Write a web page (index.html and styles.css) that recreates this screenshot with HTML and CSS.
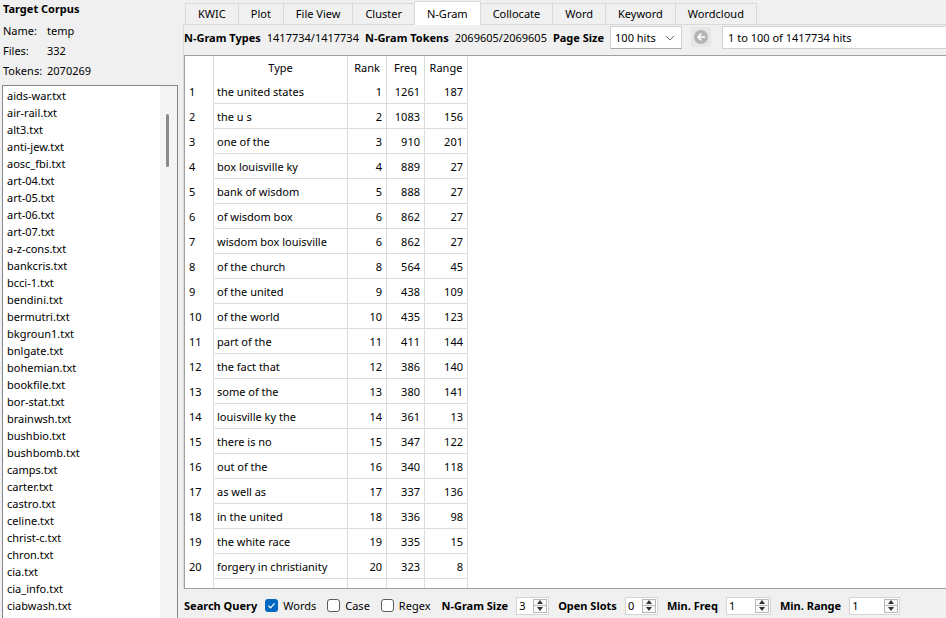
FILE: index.html
```html
<!DOCTYPE html>
<html lang="en">
<head>
    <meta charset="UTF-8">
    <title>AntConc - N-Gram</title>
    <link rel="stylesheet" href="styles.css">
</head>
<body>
<div class="app">
    <aside class="sidebar">
        <div class="corpus-title">Target Corpus</div>
        <div class="corpus-info">
            <span>Name:</span><span>temp</span>
            <span>Files:</span><span>332</span>
            <span>Tokens:</span><span>2070269</span>
        </div>
        <div class="file-list">
            <ul class="files">
                <li>aids-war.txt</li>
                <li>air-rail.txt</li>
                <li>alt3.txt</li>
                <li>anti-jew.txt</li>
                <li>aosc_fbi.txt</li>
                <li>art-04.txt</li>
                <li>art-05.txt</li>
                <li>art-06.txt</li>
                <li>art-07.txt</li>
                <li>a-z-cons.txt</li>
                <li>bankcris.txt</li>
                <li>bcci-1.txt</li>
                <li>bendini.txt</li>
                <li>bermutri.txt</li>
                <li>bkgroun1.txt</li>
                <li>bnlgate.txt</li>
                <li>bohemian.txt</li>
                <li>bookfile.txt</li>
                <li>bor-stat.txt</li>
                <li>brainwsh.txt</li>
                <li>bushbio.txt</li>
                <li>bushbomb.txt</li>
                <li>camps.txt</li>
                <li>carter.txt</li>
                <li>castro.txt</li>
                <li>celine.txt</li>
                <li>christ-c.txt</li>
                <li>chron.txt</li>
                <li>cia.txt</li>
                <li>cia_info.txt</li>
                <li>ciabwash.txt</li>
            </ul>
            <div class="scrollbar"><div class="thumb"></div></div>
        </div>
    </aside>

    <main class="main">
        <nav class="tabs">
            <div class="tab">KWIC</div>
            <div class="tab">Plot</div>
            <div class="tab">File View</div>
            <div class="tab">Cluster</div>
            <div class="tab active">N-Gram</div>
            <div class="tab">Collocate</div>
            <div class="tab">Word</div>
            <div class="tab">Keyword</div>
            <div class="tab">Wordcloud</div>
        </nav>

        <section class="tab-panel">
            <div class="toolbar">
                <span class="label">N-Gram Types</span>
                <span class="value">1417734/1417734</span>
                <span class="label">N-Gram Tokens</span>
                <span class="value">2069605/2069605</span>
                <span class="label">Page Size</span>
                <div class="select">
                    <span>100 hits</span>
                    <svg width="10" height="6" viewBox="0 0 10 6"><polyline points="1,1 5,5 9,1" fill="none" stroke="#6b6b6b" stroke-width="1"/></svg>
                </div>
                <button class="nav-btn" type="button">
                    <svg width="14" height="14" viewBox="0 0 14 14">
                        <circle cx="7" cy="7" r="7" fill="#b4b4b4"/>
                        <path d="M10.5 7H4 M6.8 4.2L4 7L6.8 9.8" fill="none" stroke="#fff" stroke-width="1.7" stroke-linecap="round" stroke-linejoin="round"/>
                    </svg>
                </button>
                <div class="hits">1 to 100 of 1417734 hits</div>
            </div>

            <div class="results">
                <table class="grid">
                    <colgroup>
                        <col class="c-num">
                        <col class="c-type">
                        <col class="c-rank">
                        <col class="c-freq">
                        <col class="c-range">
                    </colgroup>
                    <thead>
                        <tr><th></th><th>Type</th><th>Rank</th><th>Freq</th><th>Range</th></tr>
                    </thead>
                    <tbody>
                        <tr><td class="num">1</td><td class="type">the united states</td><td>1</td><td>1261</td><td>187</td></tr>
                        <tr><td class="num">2</td><td class="type">the u s</td><td>2</td><td>1083</td><td>156</td></tr>
                        <tr><td class="num">3</td><td class="type">one of the</td><td>3</td><td>910</td><td>201</td></tr>
                        <tr><td class="num">4</td><td class="type">box louisville ky</td><td>4</td><td>889</td><td>27</td></tr>
                        <tr><td class="num">5</td><td class="type">bank of wisdom</td><td>5</td><td>888</td><td>27</td></tr>
                        <tr><td class="num">6</td><td class="type">of wisdom box</td><td>6</td><td>862</td><td>27</td></tr>
                        <tr><td class="num">7</td><td class="type">wisdom box louisville</td><td>6</td><td>862</td><td>27</td></tr>
                        <tr><td class="num">8</td><td class="type">of the church</td><td>8</td><td>564</td><td>45</td></tr>
                        <tr><td class="num">9</td><td class="type">of the united</td><td>9</td><td>438</td><td>109</td></tr>
                        <tr><td class="num">10</td><td class="type">of the world</td><td>10</td><td>435</td><td>123</td></tr>
                        <tr><td class="num">11</td><td class="type">part of the</td><td>11</td><td>411</td><td>144</td></tr>
                        <tr><td class="num">12</td><td class="type">the fact that</td><td>12</td><td>386</td><td>140</td></tr>
                        <tr><td class="num">13</td><td class="type">some of the</td><td>13</td><td>380</td><td>141</td></tr>
                        <tr><td class="num">14</td><td class="type">louisville ky the</td><td>14</td><td>361</td><td>13</td></tr>
                        <tr><td class="num">15</td><td class="type">there is no</td><td>15</td><td>347</td><td>122</td></tr>
                        <tr><td class="num">16</td><td class="type">out of the</td><td>16</td><td>340</td><td>118</td></tr>
                        <tr><td class="num">17</td><td class="type">as well as</td><td>17</td><td>337</td><td>136</td></tr>
                        <tr><td class="num">18</td><td class="type">in the united</td><td>18</td><td>336</td><td>98</td></tr>
                        <tr><td class="num">19</td><td class="type">the white race</td><td>19</td><td>335</td><td>15</td></tr>
                        <tr><td class="num">20</td><td class="type">forgery in christianity</td><td>20</td><td>323</td><td>8</td></tr>
                        <tr><td class="num">21</td><td class="type">to be found</td><td>21</td><td>319</td><td>9</td></tr>
                    </tbody>
                </table>
            </div>
        </section>

        <div class="search-bar">
            <span class="label">Search Query</span>
            <label class="check first">
                <svg width="13" height="13" viewBox="0 0 13 13">
                    <rect x="0" y="0" width="13" height="13" rx="3" fill="#0067c0"/>
                    <polyline points="3.5,6.8 5.6,8.8 9.6,4.4" fill="none" stroke="#fff" stroke-width="1.2"/>
                </svg>
                Words
            </label>
            <label class="check">
                <svg width="13" height="13" viewBox="0 0 13 13"><rect x="0.5" y="0.5" width="12" height="12" rx="2.5" fill="#fff" stroke="#5c5c5c"/></svg>
                Case
            </label>
            <label class="check">
                <svg width="13" height="13" viewBox="0 0 13 13"><rect x="0.5" y="0.5" width="12" height="12" rx="2.5" fill="#fff" stroke="#5c5c5c"/></svg>
                Regex
            </label>
            <div class="field">
                <span class="label">N-Gram Size</span>
                <div class="spin spin-sm">
                    <span class="spin-val">3</span>
                    <span class="spin-btns">
                        <span><svg width="6" height="4" viewBox="0 0 6 4"><polygon points="0,4 3,0 6,4" fill="#333"/></svg></span>
                        <span><svg width="6" height="4" viewBox="0 0 6 4"><polygon points="0,0 3,4 6,0" fill="#333"/></svg></span>
                    </span>
                </div>
            </div>
            <div class="field">
                <span class="label">Open Slots</span>
                <div class="spin spin-sm">
                    <span class="spin-val">0</span>
                    <span class="spin-btns">
                        <span><svg width="6" height="4" viewBox="0 0 6 4"><polygon points="0,4 3,0 6,4" fill="#333"/></svg></span>
                        <span><svg width="6" height="4" viewBox="0 0 6 4"><polygon points="0,0 3,4 6,0" fill="#333"/></svg></span>
                    </span>
                </div>
            </div>
            <div class="field">
                <span class="label">Min. Freq</span>
                <div class="spin spin-md">
                    <span class="spin-val">1</span>
                    <span class="spin-btns">
                        <span><svg width="6" height="4" viewBox="0 0 6 4"><polygon points="0,4 3,0 6,4" fill="#333"/></svg></span>
                        <span><svg width="6" height="4" viewBox="0 0 6 4"><polygon points="0,0 3,4 6,0" fill="#333"/></svg></span>
                    </span>
                </div>
            </div>
            <div class="field">
                <span class="label">Min. Range</span>
                <div class="spin spin-lg">
                    <span class="spin-val">1</span>
                    <span class="spin-btns">
                        <span><svg width="6" height="4" viewBox="0 0 6 4"><polygon points="0,4 3,0 6,4" fill="#333"/></svg></span>
                        <span><svg width="6" height="4" viewBox="0 0 6 4"><polygon points="0,0 3,4 6,0" fill="#333"/></svg></span>
                    </span>
                </div>
            </div>
        </div>
    </main>
</div>
</body>
</html>
```

FILE: styles.css
```css
* {
    margin: 0;
    padding: 0;
    box-sizing: border-box;
}

body {
    font-family: "Noto Sans", "Segoe UI", Arial, sans-serif;
    font-size: 11px;
    color: #000;
    background: #f0f0f0;
    width: 946px;
    height: 618px;
    overflow: hidden;
}

.app {
    display: flex;
    height: 618px;
}

/* left: corpus info + file list */

.sidebar {
    width: 183px;
    flex-shrink: 0;
    display: flex;
    flex-direction: column;
    padding-left: 2px;
    min-height: 0;
}

.corpus-title {
    font-weight: 700;
    line-height: 18px;
    padding-left: 1px;
    margin-bottom: 2px;
}

.corpus-info {
    display: grid;
    grid-template-columns: 44px auto;
    grid-auto-rows: 20.3px;
    align-items: center;
    padding-left: 1px;
}

.file-list {
    margin-top: 4px;
    width: 176px;
    flex: 1;
    min-height: 0;
    border: 1px solid #828790;
    border-bottom: none;
    background: #fff;
    display: flex;
    overflow: hidden;
}

.files {
    list-style: none;
    flex: 1;
    padding: 1px 0 0 4px;
}

.files li {
    line-height: 17px;
    white-space: nowrap;
}

.scrollbar {
    width: 17px;
    background: #f4f4f4;
}

.thumb {
    width: 3px;
    height: 53px;
    margin: 28px 0 0 6px;
    background: #8a8a8a;
    border-radius: 2px;
}

/* right: tabs */

.main {
    flex: 1;
    display: flex;
    flex-direction: column;
    min-width: 0;
}

.tabs {
    display: flex;
    align-items: flex-end;
    height: 25px;
    padding-left: 2px;
    border-bottom: 1px solid #d9d9d9;
}

.tab {
    height: 21px;
    line-height: 20px;
    padding: 0 12px;
    border: 1px solid #d9d9d9;
    border-bottom: none;
    margin-right: -1px;
    background: #f0f0f0;
    white-space: nowrap;
}

.tab.active {
    height: 24px;
    line-height: 24px;
    margin-bottom: -1px;
    padding: 0 12px;
    background: #fff;
}

.tab-panel {
    flex: 1;
    min-height: 0;
    display: flex;
    flex-direction: column;
    border-left: 1px solid #d9d9d9;
}

/* toolbar */

.toolbar {
    height: 30px;
    flex-shrink: 0;
    display: flex;
    align-items: flex-start;
    gap: 6px;
    padding-top: 1px;
    white-space: nowrap;
}

.label {
    font-weight: 700;
    white-space: nowrap;
}

.toolbar .label,
.toolbar .value {
    line-height: 23px;
}

.select {
    width: 72px;
    height: 23px;
    display: flex;
    align-items: center;
    justify-content: space-between;
    padding: 0 6px 0 4px;
    background: #fff;
    border: 1px solid #d0d0d0;
    border-bottom-color: #a8a8a8;
}

.nav-btn {
    width: 20px;
    height: 20px;
    margin: 1px 5px 0 3px;
    display: flex;
    align-items: center;
    justify-content: center;
    background: #e6e6e6;
    border: none;
    border-radius: 3px;
}

.hits {
    flex: 1;
    height: 23px;
    line-height: 21px;
    padding-left: 5px;
    background: #fff;
    border: 1px solid #d0d0d0;
    border-right: none;
}

/* results table */

.results {
    flex: 1;
    min-height: 0;
    overflow: hidden;
    background: #fff;
    border: 1px solid #a0a0a0;
    border-right: none;
}

.grid {
    border-collapse: separate;
    border-spacing: 0;
    table-layout: fixed;
    width: 283px;
}

.c-num { width: 29px; }
.c-type { width: 134px; }
.c-rank { width: 39px; }
.c-freq { width: 38px; }
.c-range { width: 43px; }

.grid th,
.grid td {
    border-right: 1px solid #dcdcdc;
    white-space: nowrap;
    overflow: hidden;
}

.grid th {
    height: 23px;
    font-weight: 400;
    text-align: center;
}

.grid td {
    height: 25px;
    padding-right: 4px;
    text-align: right;
    border-bottom: 1px solid #dcdcdc;
}

.grid td.num {
    text-align: left;
    padding-left: 4px;
    border-bottom-color: #fff;
}

.grid td.type {
    text-align: left;
    padding-left: 3px;
}

/* search options */

.search-bar {
    height: 29px;
    flex-shrink: 0;
    display: flex;
    align-items: center;
    gap: 9px;
    padding: 4px 0 0 1px;
    white-space: nowrap;
}

.check {
    display: flex;
    align-items: center;
    gap: 5px;
    margin-right: 2px;
}

.check.first {
    margin-left: -1px;
}

.field {
    display: flex;
    align-items: center;
    gap: 8px;
}

.spin {
    height: 18px;
    display: flex;
    background: #fff;
    border: 1px solid #d4d4d4;
}

.spin-sm { width: 33px; }
.spin-md { width: 45px; }
.spin-lg { width: 51px; }

.spin-val {
    flex: 1;
    line-height: 16px;
    padding-left: 2px;
}

.spin-btns {
    width: 14px;
    margin: 1px 1px 1px 0;
    display: flex;
    flex-direction: column;
    border: 1px solid #b8b8b8;
    background: #fafafa;
}

.spin-btns span {
    flex: 1;
    display: flex;
    align-items: center;
    justify-content: center;
}

.spin-btns span + span {
    border-top: 1px solid #b8b8b8;
}
```
